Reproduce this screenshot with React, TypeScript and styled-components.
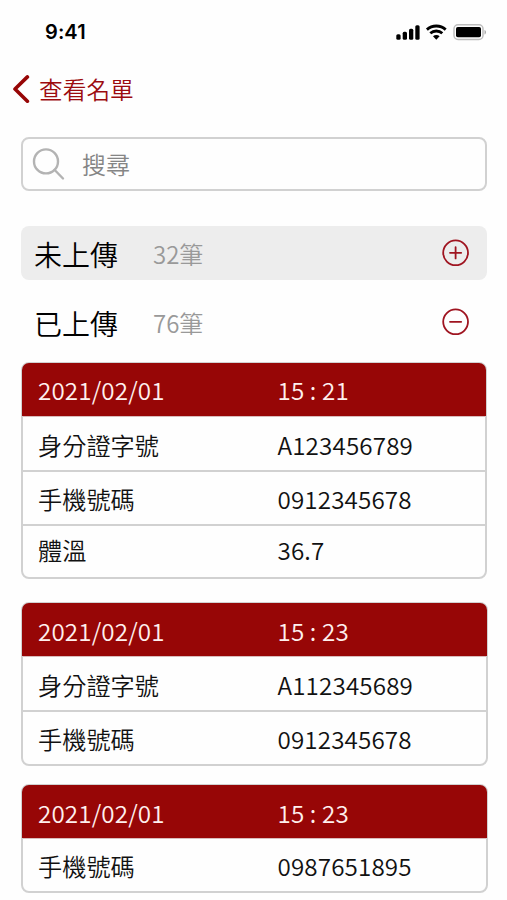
import React from "react";
import styled, { createGlobalStyle } from "styled-components";

const RED = "#970606";
const LINE = "#d1d1d1";

const GlobalStyle = createGlobalStyle`
  *, *::before, *::after { box-sizing: border-box; }
  body {
    margin: 0;
    background: #fefefe;
    color: #111;
    font-family: "Noto Sans CJK TC", "Noto Sans", sans-serif;
    font-weight: 350;
  }
`;

const Screen = styled.main`
  width: 507px;
  height: 900px;
  overflow: hidden;
  display: flex;
  flex-direction: column;
`;

const StatusBar = styled.header`
  height: 63px;
  padding: 0 20px 0 45px;
  display: flex;
  align-items: center;
  justify-content: space-between;
`;

const Clock = styled.time`
  font: 600 20px/24px Inter, sans-serif;
  letter-spacing: 0.1px;
  color: #000;
`;

const StatusIcons = styled.div`
  display: flex;
  align-items: center;
`;

const NavBar = styled.nav`
  height: 54px;
  padding-left: 12px;
  display: flex;
  align-items: center;
  gap: 9px;
  color: #9c0b0f;
`;

const NavTitle = styled.h1`
  margin: 0;
  padding-bottom: 2px;
  font-size: 23.7px;
  font-weight: 350;
  line-height: 34px;
`;

const Content = styled.div`
  padding: 20px 20px 0 21px;
  display: flex;
  flex-direction: column;
`;

const SearchBox = styled.label`
  width: 466px;
  height: 54px;
  padding-left: 9px;
  border: 2px solid ${LINE};
  border-radius: 8px;
  display: flex;
  align-items: center;
  gap: 17px;
`;

const SearchText = styled.span`
  font-size: 24px;
  line-height: 34px;
  color: #858585;
`;

const Section = styled.section<{ $filled?: boolean; $top: number }>`
  width: 466px;
  height: 54px;
  margin-top: ${(p) => p.$top}px;
  padding: 0 17px 0 13px;
  border-radius: 8px;
  background: ${(p) => (p.$filled ? "#ededed" : "transparent")};
  display: grid;
  grid-template-columns: 119px 1fr 28px;
  align-items: center;
`;

const SectionName = styled.h2`
  margin: 0;
  padding-top: 2px;
  font-size: 28px;
  font-weight: 350;
  line-height: 40px;
  color: #000;
`;

const Count = styled.span`
  padding-top: 1px;
  font-size: 24px;
  line-height: 34px;
  color: #999;
`;

const Card = styled.article<{ $wide?: boolean; $top: number }>`
  width: ${(p) => (p.$wide ? 467 : 466)}px;
  margin-top: ${(p) => p.$top}px;
  border: 2px solid ${LINE};
  border-radius: 8px;
`;

const Row = styled.div<{ $height: number; $shift?: number }>`
  height: ${(p) => p.$height}px;
  padding: ${(p) => {
    const shift = p.$shift ?? 1;
    return shift < 0 ? `0 0 ${-shift}px 15px` : `${shift}px 0 0 15px`;
  }};
  display: grid;
  grid-template-columns: 239.5px 1fr;
  align-items: center;
  font-size: 24.2px;
  line-height: 36px;
  white-space: pre;

  & + & { border-top: 2px solid ${LINE}; }
`;

const Label = styled.span``;

const Value = styled.span`
  letter-spacing: 0.14px;
`;

const CardHead = styled(Row)`
  margin: -1px -1px 0;
  padding-left: 16px;
  background: ${RED};
  color: #fff0ee;
  border-radius: 7px 7px 0 0;

  & + ${Row} { border-top: 1px solid #d9bcbc; }
`;

const SignalIcon = () => (
  <svg width="25" height="18" viewBox="0 0 25 18">
    <rect x="0.3" y="11.2" width="4.3" height="5.5" rx="1.5" />
    <rect x="6.7" y="8.8" width="4.3" height="7.9" rx="1.5" />
    <rect x="13" y="5.7" width="4.3" height="11" rx="1.5" />
    <rect x="19.3" y="2.2" width="4.3" height="14.5" rx="1.5" />
  </svg>
);

const WifiIcon = () => (
  <svg width="32" height="18" viewBox="0 0 32 18">
    <g fill="none" stroke="#000" strokeWidth="2.8">
      <path d="M5.9 6.6C11.2 1.8 19.4 1.8 24.7 6.6" />
      <path d="M9.3 10.3C12.7 7.2 17.9 7.2 21.3 10.3" />
    </g>
    <path d="M12 13.2C13.9 11.7 16.7 11.7 18.6 13.2L15.3 16.7Z" />
  </svg>
);

const BatteryIcon = () => (
  <svg width="34" height="18" viewBox="0 0 34 18">
    <rect x="1" y="1.8" width="29" height="14.6" rx="4" fill="none" stroke="#bdbdbd" strokeWidth="1.5" />
    <rect x="3" y="4" width="25" height="10.2" rx="1.8" />
    <path d="M31.5 7V11.5C33.5 10.8 33.5 7.7 31.5 7Z" fill="#aaa" />
  </svg>
);

const BackIcon = () => (
  <svg width="18" height="30" viewBox="0 0 18 30" fill="none" stroke={RED} strokeWidth="3.6" strokeLinecap="round" strokeLinejoin="round">
    <path d="M15.4 1.9L3 14L15.4 26.2" />
  </svg>
);

const SearchIcon = () => (
  <svg width="33" height="34" viewBox="0 0 33 34" fill="none" stroke="#b3b3b3" strokeWidth="2.4" strokeLinecap="round">
    <circle cx="14" cy="14.4" r="12" />
    <path d="M22.7 23L31 31.5" />
  </svg>
);

const ToggleIcon = ({ open }: { open: boolean }) => (
  <svg width="28" height="28" viewBox="0 0 28 28" fill="none" stroke="#9f1420" strokeWidth="1.8" strokeLinecap="round">
    <circle cx="13.6" cy="13.8" r="12.4" />
    <path d={open ? "M8 13.8H19.2" : "M8 13.8H19.2M13.6 8.2V19.4"} />
  </svg>
);

type Entry = { label: string; value: string; height: number; shift?: number };
type RecordData = { time: string; top: number; wide?: boolean; entries: Entry[] };

const records: RecordData[] = [
  {
    time: "15 : 21",
    top: 13,
    entries: [
      { label: "身分證字號", value: "A123456789", height: 54, shift: 3 },
      { label: "手機號碼", value: "0912345678", height: 54 },
      { label: "體溫", value: "36.7", height: 53, shift: -3 },
    ],
  },
  {
    time: "15 : 23",
    top: 23,
    wide: true,
    entries: [
      { label: "身分證字號", value: "A112345689", height: 54, shift: 3 },
      { label: "手機號碼", value: "0912345678", height: 54 },
    ],
  },
  {
    time: "15 : 23",
    top: 18,
    wide: true,
    entries: [{ label: "手機號碼", value: "0987651895", height: 53 }],
  },
];

export default function App() {
  return (
    <>
      <GlobalStyle />
      <Screen>
        <StatusBar>
          <Clock>9:41</Clock>
          <StatusIcons>
            <SignalIcon />
            <WifiIcon />
            <BatteryIcon />
          </StatusIcons>
        </StatusBar>
        <NavBar>
          <BackIcon />
          <NavTitle>查看名單</NavTitle>
        </NavBar>
        <Content>
          <SearchBox>
            <SearchIcon />
            <SearchText>搜尋</SearchText>
          </SearchBox>
          <Section $filled $top={35}>
            <SectionName>未上傳</SectionName>
            <Count>32筆</Count>
            <ToggleIcon open={false} />
          </Section>
          <Section $top={15}>
            <SectionName>已上傳</SectionName>
            <Count>76筆</Count>
            <ToggleIcon open />
          </Section>
          {records.map((record, i) => (
            <Card key={i} $top={record.top} $wide={record.wide}>
              <CardHead $height={53} $shift={record.wide ? 3 : 1}>
                <Value>2021/02/01</Value>
                <Value>{record.time}</Value>
              </CardHead>
              {record.entries.map((entry) => (
                <Row key={entry.label} $height={entry.height} $shift={entry.shift}>
                  <Label>{entry.label}</Label>
                  <Value>{entry.value}</Value>
                </Row>
              ))}
            </Card>
          ))}
        </Content>
      </Screen>
    </>
  );
}
